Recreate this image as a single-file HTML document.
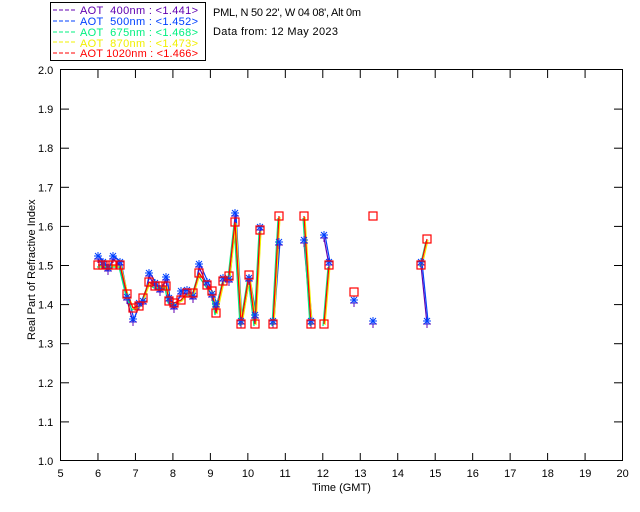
<!DOCTYPE html>
<html><head><meta charset="utf-8"><style>
html,body{margin:0;padding:0;background:#fff;width:640px;height:512px;overflow:hidden}
svg{display:block}
text{font-family:"Liberation Sans",sans-serif;font-size:11px}
</style></head><body>
<svg id="s" width="640" height="512" xmlns="http://www.w3.org/2000/svg">
<rect x="50.5" y="2.5" width="155" height="58" fill="none" stroke="#000"/>
<g style="font-size:11.5px">
<line x1="53" y1="10" x2="75" y2="10" stroke="#6000b0" stroke-dasharray="4,2"/><text x="80" y="14" fill="#6000b0" xml:space="preserve" textLength="118">AOT  400nm : &lt;1.441&gt;</text>
<line x1="53" y1="21" x2="75" y2="21" stroke="#0040ff" stroke-dasharray="4,2"/><text x="80" y="25" fill="#0040ff" xml:space="preserve" textLength="118">AOT  500nm : &lt;1.452&gt;</text>
<line x1="53" y1="32" x2="75" y2="32" stroke="#00f080" stroke-dasharray="4,2"/><text x="80" y="36" fill="#00f080" xml:space="preserve" textLength="118">AOT  675nm : &lt;1.468&gt;</text>
<line x1="53" y1="42" x2="75" y2="42" stroke="#f0f000" stroke-dasharray="4,2"/><text x="80" y="47" fill="#f0f000" xml:space="preserve" textLength="118">AOT  870nm : &lt;1.473&gt;</text>
<line x1="53" y1="53" x2="75" y2="53" stroke="#ff0000" stroke-dasharray="4,2"/><text x="80" y="57" fill="#ff0000" xml:space="preserve" textLength="118">AOT 1020nm : &lt;1.466&gt;</text>
</g>
<text x="213" y="16" textLength="148">PML, N 50 22', W 04 08', Alt 0m</text>
<text x="213" y="35" textLength="125">Data from: 12 May 2023</text>
<rect x="60.5" y="69.5" width="562" height="391" fill="none" stroke="#000"/>
<g id="ax" stroke="#000"></g>
<g id="lab"></g>
<text x="312" y="491">Time (GMT)</text>
<text transform="translate(35,340) rotate(-90)">Real Part of Refractive Index</text>
<g id="data" fill="none"></g>
</svg>
<script>
var ns="http://www.w3.org/2000/svg",ax=document.getElementById('ax'),lab=document.getElementById('lab'),d=document.getElementById('data');
function el(p,t,a,txt){var e=document.createElementNS(ns,t);for(var k in a)e.setAttribute(k,a[k]);if(txt)e.textContent=txt;p.appendChild(e);return e;}
for(var h=5;h<=20;h++){var x=60.5+(h-5)*37.47;
 if(h>5&&h<20){el(ax,'line',{x1:x,y1:461,x2:x,y2:453});el(ax,'line',{x1:x,y1:70,x2:x,y2:78});}
 el(lab,'text',{x:x-(h>9?6:3),y:477},String(h));}
for(var i=0;i<=10;i++){var y=461-i*39.1;
 if(i>0&&i<10){el(ax,'line',{x1:61,y1:y,x2:69,y2:y});el(ax,'line',{x1:622,y1:y,x2:614,y2:y});}
 el(lab,'text',{x:38,y:y+4},(1+i/10).toFixed(1));}
var R=[[98,265],[103,265],[108,265],[113,265],[120,265],[127,294],[133,308],[139,306],[143,298],[149,282],[155,286],[160,286],[166,286],[169,301],[174,303],[181,300],[187,293],[193,293],[199,273],[207,285],[212,291],[216,313],[223,281],[229,276],[235,222],[241,324],[249,275],[255,324],[260,230],null,[273,324],[279,216],null,[304,216],[311,324],null,[324,324],[329,265],null,[354,292],null,[373,216],null,[421,265],[427,239]];
function poly(pts,col,dx,dy){var s=[];function flush(){if(s.length>1)el(d,'polyline',{points:s.join(' '),stroke:col,'stroke-width':1.2});s=[];}
 pts.forEach(function(p){if(!p){flush();return;}s.push((p[0]+dx)+','+(p[1]+dy));});flush();}
var P=R.map(function(p,i){return p?[p[0],p[1]+((i%3)-1)*6]:null;});
P[6]=[133,322];P[25]=[241,324];P[31]=[279,245];P[30]=[273,324];P[33]=[304,243];P[34]=[311,324];P[36]=[324,238];P[37]=[329,265];P[39]=[354,303];P[41]=[373,324];P[43]=[421,265];P[44]=[427,324];
poly(P,'#6000b0',0,0);
poly(P,'#0040ff',1,-3);
poly(R,'#00f080',-1,2);
poly(R,'#f0f000',1,1);
poly(R,'#ff0000',0,0);
P.forEach(function(p){if(!p)return;el(d,'path',{d:'M'+(p[0]-4)+' '+p[1]+'h8M'+p[0]+' '+(p[1]-4)+'v8',stroke:'#6000b0'});
 el(d,'path',{d:'M'+(p[0]-3)+' '+(p[1]-6)+'l6 6M'+(p[0]+3)+' '+(p[1]-6)+'l-6 6M'+(p[0]-4)+' '+(p[1]-3)+'h8M'+p[0]+' '+(p[1]-7)+'v8',stroke:'#0040ff'});});
R.forEach(function(p){if(!p)return;el(d,'rect',{x:p[0]-4,y:p[1]-4,width:8,height:8,stroke:'#ff0000','stroke-width':1.2});});
</script>
</body></html>
